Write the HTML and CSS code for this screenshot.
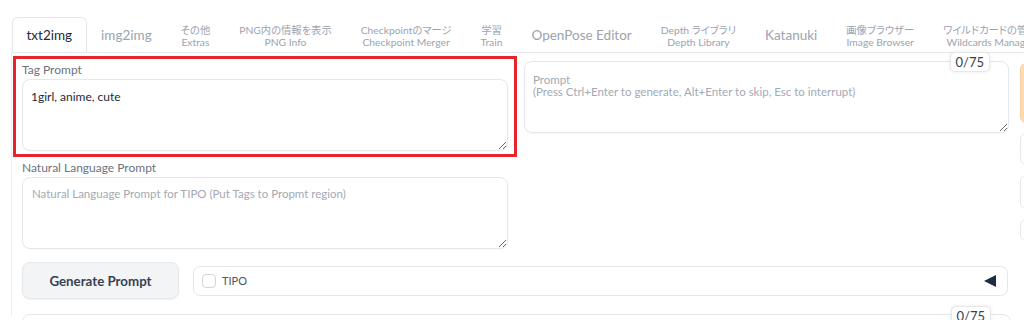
FILE: index.html
```html
<!DOCTYPE html>
<html>
<head>
    <title>Stable Diffusion WebUI - txt2img</title>
    <link rel="stylesheet" href="styles.css">
</head>
<body>
    <div class="tabs">
        <button class="tab active">txt2img</button>
        <button class="tab">img2img</button>
        <button class="tab two"><span>その他</span><span>Extras</span></button>
        <button class="tab two"><span>PNG内の情報を表示</span><span>PNG Info</span></button>
        <button class="tab two"><span>Checkpointのマージ</span><span>Checkpoint Merger</span></button>
        <button class="tab two"><span>学習</span><span>Train</span></button>
        <button class="tab">OpenPose Editor</button>
        <button class="tab two"><span>Depth ライブラリ</span><span>Depth Library</span></button>
        <button class="tab">Katanuki</button>
        <button class="tab two"><span>画像ブラウザー</span><span>Image Browser</span></button>
        <button class="tab two"><span>ワイルドカードの管理</span><span>Wildcards Manager</span></button>
    </div>

    <div class="panel">
        <div class="top-row">
            <div class="left-col">
                <div class="block tag-block">
                    <label class="block-label">Tag Prompt</label>
                    <textarea class="box">1girl, anime, cute</textarea>
                </div>
                <div class="block nl-block">
                    <label class="block-label">Natural Language Prompt</label>
                    <textarea class="box" placeholder="Natural Language Prompt for TIPO (Put Tags to Propmt region)"></textarea>
                </div>
            </div>

            <div class="prompt-col">
                <span class="counter">0/75</span>
                <textarea class="box prompt" placeholder="Prompt&#10;(Press Ctrl+Enter to generate, Alt+Enter to skip, Esc to interrupt)"></textarea>
            </div>

            <div class="side-col">
                <div class="side-btn primary"></div>
                <div class="side-btn"></div>
                <div class="side-btn tall"></div>
                <div class="side-btn small"></div>
            </div>
        </div>

        <div class="tipo-row">
            <button class="gen-btn">Generate Prompt</button>
            <div class="accordion">
                <label class="check"><input type="checkbox"> TIPO</label>
                <svg class="arrow" width="12" height="12" viewBox="0 0 12 12">
                    <polygon points="12,0 12,12 0,6" fill="#1f2d44"/>
                </svg>
            </div>
        </div>

        <div class="neg-row">
            <span class="counter">0/75</span>
            <div class="neg-box"></div>
        </div>
    </div>
</body>
</html>
```

FILE: styles.css
```css
body {
    margin: 0;
    padding-top: 17px;
    background: #fff;
    font-family: "Lato", "Noto Sans CJK JP", sans-serif;
    color: #1f2937;
    overflow: hidden;
    width: 1024px;
    height: 320px;
}

.tabs {
    display: flex;
    margin-left: 12px;
    height: 35px;
    border-bottom: 1px solid #e5e7eb;
    white-space: nowrap;
    overflow: hidden;
}

.tab {
    font-family: inherit;
    background: none;
    border: 1px solid transparent;
    border-bottom: none;
    padding: 0 13.5px 2px;
    height: 36px;
    font-size: 13.5px;
    color: #9ca3af;
    display: flex;
    flex-direction: column;
    align-items: center;
    justify-content: center;
    flex-shrink: 0;
}

.tab.two {
    font-size: 10.3px;
    line-height: 12.5px;
    padding-top: 1px;
    padding-bottom: 0;
}

.tab.two span:first-child {
    font-feature-settings: "palt";
}

.tab.active {
    color: #1f2937;
    background: #fff;
    border-color: #e5e7eb;
    border-radius: 6px 6px 0 0;
    padding: 0 13.5px 2px;
}

.panel {
    margin-left: 11px;
    border-left: 1px solid #eceef1;
    padding: 3px 0 0 1px;
    height: 260px;
}

.top-row {
    display: flex;
    gap: 7px;
}

.left-col {
    width: 504px;
    flex-shrink: 0;
}

.block-label {
    display: block;
    font-size: 12px;
    line-height: 16px;
    color: #6b7280;
    margin-bottom: 1px;
}

.box {
    display: block;
    box-sizing: border-box;
    width: 100%;
    height: 72px;
    border: 1px solid #e5e7eb;
    border-radius: 8px;
    box-shadow: 0 1px 2px rgba(0, 0, 0, 0.03);
    font-family: inherit;
    font-size: 11.5px;
    line-height: 13px;
    color: #1f2937;
    padding: 11px 8px;
    outline: none;
    resize: vertical;
}

.box::placeholder {
    color: #a3a9b5;
}

.tag-block {
    border: 3px solid #e5242b;
    padding: 3px 3px 3px 6px;
}

.tag-block .box {
    width: 486px;
    font-size: 12px;
    padding: 10px 8px;
}

.nl-block {
    padding: 3px 9px 0 9px;
}

.nl-block .box {
    padding: 9px 9px;
}

.prompt-col {
    position: relative;
    width: 485px;
    flex-shrink: 0;
    padding-top: 5px;
}

.prompt-col .prompt {
    padding: 12px 8px;
    line-height: 12px;
}

.counter {
    position: absolute;
    top: -4px;
    right: 19px;
    font-size: 13px;
    line-height: 16px;
    padding: 1px 5px;
    background: #fff;
    border: 1px solid #e5e7eb;
    border-radius: 5px;
    box-shadow: 0 0 4px rgba(0, 0, 0, 0.08);
    color: #374151;
    z-index: 1;
}

.side-col {
    margin-left: 4px;
    padding-top: 7px;
    display: flex;
    flex-direction: column;
    gap: 10px;
    width: 100px;
    flex-shrink: 0;
}

.side-btn {
    height: 30px;
    border: 1px solid #e5e7eb;
    border-radius: 6px;
    background: #fff;
}

.side-btn.primary {
    height: 58px;
    background: #fcdcb6;
    border-color: #fdcf9f;
}

.side-btn.tall {
    height: 32px;
}

.side-btn.small {
    height: 20px;
}

.tipo-row {
    display: flex;
    align-items: center;
    gap: 14px;
    padding-left: 9px;
    margin-top: 13px;
}

.gen-btn {
    width: 157px;
    height: 37px;
    font-family: inherit;
    font-weight: bold;
    font-size: 13.3px;
    color: #374151;
    background: #f3f4f6;
    border: 1px solid #e5e7eb;
    border-radius: 8px;
    box-shadow: 0 1px 2px rgba(0, 0, 0, 0.06);
}

.accordion {
    width: 815px;
    height: 30px;
    box-sizing: border-box;
    border: 1px solid #e5e7eb;
    border-radius: 7px;
    display: flex;
    align-items: center;
    justify-content: space-between;
    padding: 0 11px 0 8px;
}

.check {
    display: flex;
    align-items: center;
    gap: 6px;
    font-size: 11px;
    color: #4b5563;
}

.check input {
    appearance: none;
    margin: 0;
    width: 14px;
    height: 14px;
    border: 1px solid #d1d5db;
    border-radius: 4px;
    background: #fff;
}

.neg-row {
    position: relative;
    margin-top: 15px;
    padding-left: 9px;
}

.neg-row .counter {
    top: -8px;
    right: 33px;
}

.neg-box {
    width: 987px;
    height: 60px;
    border: 1px solid #e5e7eb;
    border-radius: 8px;
}
```
